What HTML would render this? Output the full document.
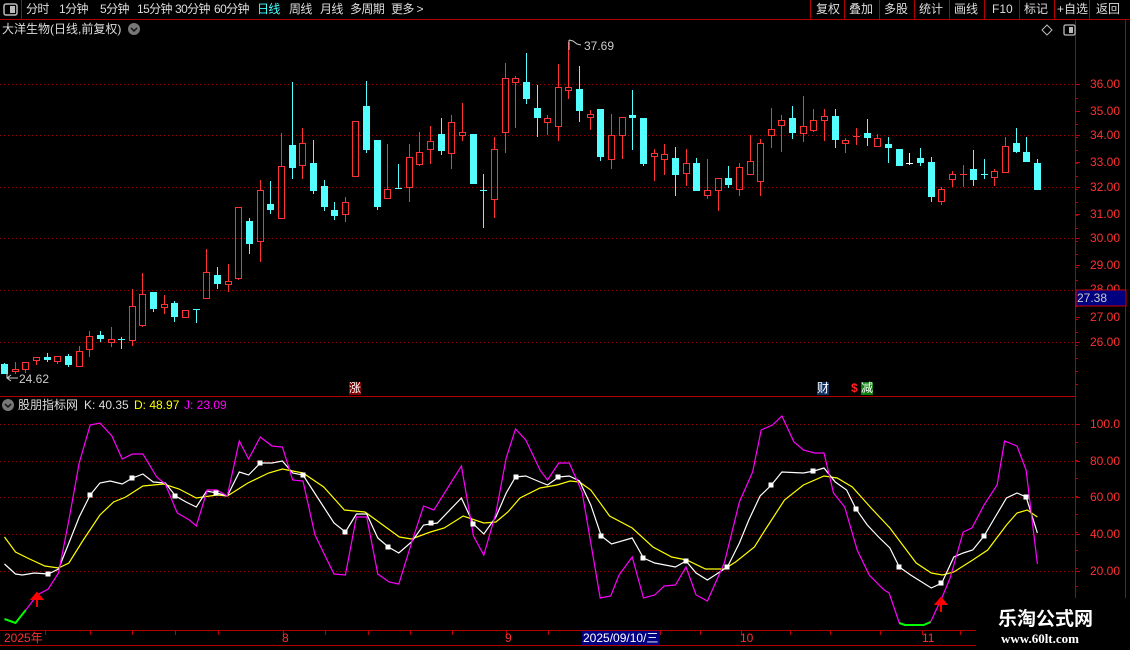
<!DOCTYPE html>
<html><head><meta charset="utf-8">
<style>
html,body{margin:0;padding:0;background:#000;width:1130px;height:650px;overflow:hidden}
body{position:relative;font-family:"Liberation Sans","Noto Sans CJK SC",sans-serif;font-size:12px;color:#ddd}
.t{position:absolute;white-space:nowrap;line-height:14px}
.m{letter-spacing:-0.6px}
svg{position:absolute;left:0;top:0}
</style></head><body>
<svg id="s" width="1130" height="650" xmlns="http://www.w3.org/2000/svg">
<g stroke="#b00000" stroke-width="1" shape-rendering="crispEdges">
<line x1="0" y1="19.5" x2="1130" y2="19.5"/>
<line x1="21.5" y1="0" x2="21.5" y2="19"/>
<line x1="810.5" y1="0" x2="810.5" y2="19"/><line x1="844.5" y1="0" x2="844.5" y2="19"/>
<line x1="879.5" y1="0" x2="879.5" y2="19"/><line x1="914.5" y1="0" x2="914.5" y2="19"/>
<line x1="949.5" y1="0" x2="949.5" y2="19"/><line x1="984.5" y1="0" x2="984.5" y2="19"/>
<line x1="1019.5" y1="0" x2="1019.5" y2="19"/><line x1="1054.5" y1="0" x2="1054.5" y2="19"/>
<line x1="1089.5" y1="0" x2="1089.5" y2="19"/>
<line x1="1075.5" y1="19" x2="1075.5" y2="630"/>
<line x1="1125.5" y1="19" x2="1125.5" y2="630"/>
<line x1="0" y1="396.5" x2="1075" y2="396.5"/>
<line x1="0" y1="630.5" x2="978" y2="630.5"/>
<line x1="0" y1="645.5" x2="978" y2="645.5"/>
</g>
<g stroke="#a00000" stroke-dasharray="1,3" stroke-width="1" shape-rendering="crispEdges">
<line x1="0" y1="84.5" x2="1075" y2="84.5"/><line x1="0" y1="135.5" x2="1075" y2="135.5"/>
<line x1="0" y1="187.5" x2="1075" y2="187.5"/><line x1="0" y1="238.5" x2="1075" y2="238.5"/>
<line x1="0" y1="290.5" x2="1075" y2="290.5"/><line x1="0" y1="342.5" x2="1075" y2="342.5"/>
<line x1="0" y1="424.5" x2="1075" y2="424.5"/><line x1="0" y1="461.5" x2="1075" y2="461.5"/>
<line x1="0" y1="497.5" x2="1075" y2="497.5"/><line x1="0" y1="534.5" x2="1075" y2="534.5"/>
<line x1="0" y1="571.5" x2="1075" y2="571.5"/>
</g>
<g id="ticks" stroke="#c00000" stroke-width="1" shape-rendering="crispEdges"></g>
<g id="candles" shape-rendering="crispEdges"></g>
<g fill="none" stroke-width="1.2">
<polyline id="D" stroke="#ffff00"/>
<polyline id="K" stroke="#ffffff"/>
<polyline id="J" stroke="#ff00ff"/>
<polyline id="JG1" stroke="#00ff00" stroke-width="2"/>
<polyline id="JG2" stroke="#00ff00" stroke-width="2"/>
</g>
<g id="sq" fill="#fff"></g>
<g stroke="#ff0000" stroke-width="2" fill="#ff0000">
<line x1="37" y1="598" x2="37" y2="607"/><polygon points="32,599 37,593 42,599"/>
<line x1="941" y1="603" x2="941" y2="612"/><polygon points="936,604 941,598 946,604"/>
</g>
<rect x="4" y="4" width="13" height="11" rx="2" fill="none" stroke="#bbb" stroke-width="1.5"/>
<rect x="10" y="6" width="5" height="7" fill="#bbb"/>
<rect x="1064" y="25" width="11" height="10" rx="1.5" fill="none" stroke="#bbb" stroke-width="1.3"/>
<rect x="1069" y="27" width="4" height="6" fill="#bbb"/>
<polygon points="1047,25 1052,30 1047,35 1042,30" fill="none" stroke="#bbb"/>
<circle cx="134" cy="29" r="6" fill="#777"/><polyline points="131,28 134,31 137,28" fill="none" stroke="#111" stroke-width="1.5"/>
<circle cx="8" cy="405" r="6" fill="#777"/><polyline points="5,404 8,407 11,404" fill="none" stroke="#111" stroke-width="1.5"/>
<polyline points="11,375 7,378 11,381" fill="none" stroke="#ccc"/><line x1="7" y1="378" x2="18" y2="378" stroke="#ccc"/><line x1="7" y1="370" x2="7" y2="378" stroke="#ccc"/>
<line x1="569" y1="40" x2="569" y2="50" stroke="#ccc"/><polyline points="569,40 573,41 577,44 581,45" fill="none" stroke="#ccc"/>
<rect x="1076" y="290" width="50" height="16" fill="#000080" stroke="#d00000"/>
<rect x="582" y="631" width="78" height="14" fill="#000080"/>
<rect x="976" y="598" width="154" height="52" fill="#000"/>
</svg>

<div class="t m" style="left:26px;top:2px;color:#ddd">分时</div>
<div class="t m" style="left:59px;top:2px">1分钟</div>
<div class="t m" style="left:100px;top:2px">5分钟</div>
<div class="t m" style="left:137px;top:2px">15分钟</div>
<div class="t m" style="left:175px;top:2px">30分钟</div>
<div class="t m" style="left:214px;top:2px">60分钟</div>
<div class="t m" style="left:257px;top:2px;color:#44ffff">日线</div>
<div class="t m" style="left:289px;top:2px">周线</div>
<div class="t m" style="left:320px;top:2px">月线</div>
<div class="t m" style="left:350px;top:2px">多周期</div>
<div class="t m" style="left:391px;top:2px">更多 &gt;</div>
<div class="t" style="left:816px;top:2px">复权</div>
<div class="t" style="left:849px;top:2px">叠加</div>
<div class="t" style="left:884px;top:2px">多股</div>
<div class="t" style="left:919px;top:2px">统计</div>
<div class="t" style="left:954px;top:2px">画线</div>
<div class="t" style="left:992px;top:2px">F10</div>
<div class="t" style="left:1024px;top:2px">标记</div>
<div class="t" style="left:1057px;top:2px">+自选</div>
<div class="t" style="left:1096px;top:2px">返回</div>
<div class="t" style="left:2px;top:22px;color:#ddd">大洋生物(日线,前复权)</div>

<div class="t" style="left:19px;top:372px;color:#ccc">24.62</div>
<div class="t" style="left:584px;top:39px;color:#ccc">37.69</div>

<div class="t" style="left:349px;top:382px;background:#800000;color:#fff;line-height:13px">涨</div>
<div class="t" style="left:817px;top:382px;background:#103060;color:#fff;line-height:13px">财</div>
<div class="t" style="left:851px;top:382px;color:#ff2020;font-weight:bold;line-height:13px">$</div>
<div class="t" style="left:861px;top:382px;background:#108010;color:#fff;line-height:13px">减</div>

<div class="t" style="left:18px;top:398px;color:#ddd">股朋指标网</div>
<div class="t" style="left:84px;top:398px;color:#ddd">K: 40.35</div>
<div class="t" style="left:134px;top:398px;color:#ffff00">D: 48.97</div>
<div class="t" style="left:184px;top:398px;color:#ff00ff">J: 23.09</div>

<div id="ax"></div>
<div class="t" style="left:1077px;top:291px;color:#ccc;font-size:12px">27.38</div>

<div class="t" style="left:4px;top:631px;color:#ff3030">2025年</div>
<div class="t" style="left:282px;top:631px;color:#ff3030">8</div>
<div class="t" style="left:505px;top:631px;color:#ff3030">9</div>
<div class="t" style="left:583px;top:631px;color:#fff">2025/09/10/三</div>
<div class="t" style="left:740px;top:631px;color:#ff3030">10</div>
<div class="t" style="left:922px;top:631px;color:#ff3030">11</div>

<div class="t" style="left:998px;top:607px;color:#fff;font-size:19px;font-weight:bold;line-height:22px;font-family:'Noto Sans CJK SC',sans-serif">乐淘公式网</div>
<div class="t" style="left:1001px;top:632px;color:#fff;font-size:13px;font-weight:bold;font-family:'Liberation Serif',serif">www.60lt.com</div>

<script>
var NS="http://www.w3.org/2000/svg";
var d=`c 364 373 363 373
r 369 371 362 373
r 362 369 362 372
r 357 360 357 364
c 357 359 353 361
r 356 361 356 363
c 356 364 354 366
r 351 366 346 366
r 336 349 331 356
c 335 338 331 341
r 339 342 327 346
c 339 340 337 348
r 306 340 289 345
r 294 325 273 326
c 292 308 292 311
r 304 307 295 313
c 303 316 301 321
r 310 317 310 317
c 309 310 309 322
r 272 298 249 298
c 275 283 267 288
r 281 284 264 291
r 207 278 207 279
c 221 243 218 253
r 190 241 180 261
c 204 209 181 213
r 166 218 133 218
c 145 167 82 178
r 143 165 128 178
c 163 190 140 193
c 186 206 180 210
c 210 215 202 219
r 202 214 197 221
r 121 176 121 176
c 106 149 81 152
c 140 206 140 209
r 189 198 144 198
c 188 189 164 188
r 157 187 144 201
r 152 164 132 165
r 141 149 126 163
c 134 150 118 154
r 122 153 115 168
r 132 135 103 140
c 134 183 134 183
c 190 191 174 227
r 149 199 137 217
r 78 132 63 152
r 78 82 76 127
c 82 98 53 103
c 108 117 85 136
r 118 122 115 134
r 87 126 64 140
r 87 90 42 98
c 89 110 66 121
r 114 117 110 129
c 109 156 109 160
r 135 159 114 168
r 117 135 117 158
c 115 117 90 149
c 118 163 118 165
r 153 156 149 180
r 154 159 144 174
c 158 174 147 195
r 163 173 149 185
c 163 190 158 190
r 190 195 159 198
r 178 190 178 210
c 178 184 166 187
r 167 189 163 195
r 161 174 135 174
r 143 181 139 195
r 129 135 108 147
r 120 125 115 151
c 118 132 106 138
r 126 133 96 141
r 120 130 109 131
r 116 120 109 140
c 116 139 109 147
r 140 143 138 152
r 136 137 128 144
c 133 137 119 145
r 138 146 134 146
c 144 147 137 162
c 149 165 149 165
w 163 164 153 164
c 158 162 148 165
c 162 196 157 201
r 189 201 187 204
r 174 179 171 186
r 174 175 165 186
c 169 179 150 185
c 174 175 159 178
r 171 177 169 185
r 146 172 137 172
c 143 151 128 152
c 152 161 137 161
c 163 189 159 189`.split("\n");
var g=document.getElementById("candles");
function el(n,a){var e=document.createElementNS(NS,n);for(var k in a)e.setAttribute(k,a[k]);return e;}
d.forEach(function(l,i){var p=l.trim().split(/\s+/);var c=p[0],bt=+p[1],bb=+p[2],wt=+p[3],wb=+p[4];
var x=Math.round(4+10.65*i);var col=c=="r"?"#ff3232":(c=="c"?"#54ffff":"#ffffff");
if(bb-bt<=1){g.appendChild(el("line",{x1:x+.5,y1:wt,x2:x+.5,y2:wb+1,stroke:col}));g.appendChild(el("line",{x1:x-3,y1:bt+.5,x2:x+4,y2:bt+.5,stroke:col}));return;}
if(wt<bt)g.appendChild(el("line",{x1:x+.5,y1:wt,x2:x+.5,y2:bt,stroke:col}));
if(wb>bb)g.appendChild(el("line",{x1:x+.5,y1:bb,x2:x+.5,y2:wb+1,stroke:col}));
if(c=="r")g.appendChild(el("rect",{x:x-2.5,y:bt+.5,width:6,height:bb-bt,fill:"none",stroke:col}));
else g.appendChild(el("rect",{x:x-3,y:bt,width:7,height:bb-bt+1,fill:col}));
});
var J="25.8,610 37.2,595 48.2,589 58.5,573 68.9,520 79.2,463 90.2,425 99.9,423 111.9,436 122.2,459 132.6,454 142.9,454 156.7,477 165.3,484 177.3,513 189.4,520 196.3,526 207.3,490 216.9,490 227.3,496 239.3,441 248.6,459 260.3,437 272,446 282.4,447 292.7,480 303,481 315,535 334,574 345.4,575 356.4,517 366.7,517 377.8,574 389.1,582 398.8,584 411.5,543 423.6,506 433.9,510 461.4,466 473.5,536 483.8,555 495.9,513 506.2,458 515.5,429 525.8,440 540,470 547.5,480 558.8,463 569.3,463 582.1,492 600.2,598 610.7,596 619,575 632.2,557 643.5,598 654.7,595 664.2,586 675.4,585 686,567 696.1,595 707.4,601 724.3,563 739.4,502 752.6,472 761.2,430 772.5,425 781.9,416 794,442 803.4,450 814.6,453 824,453 833.5,493 844.7,507 857.2,550 869.2,575 884.2,590 889.1,593 899.3,623 904.9,625 923.7,625 930.5,622 941.8,598 950.1,578 963.2,532 971.9,528 984,505 997.1,485 1004.6,441 1017,446 1026.1,470 1037.4,564";
var K="4.5,564 15.5,574 22.4,575 34.4,573 48.2,574 58.5,569 68.9,543 79.2,517 90.2,495 99.9,483 110.2,481 122.2,484 132.6,478 142.9,474 153.2,482 165.3,483 175.6,496 186,502 196.3,507 206.6,491 216.9,493 227.3,496 239.3,472 248.6,475 260.3,463 272,463 282.4,461 292.7,473 303,475 323.7,507 334,523 345.4,532 356.4,514 366.7,514 377.8,538 388.4,547 398.8,553 411.5,542 423.6,525 437.3,523 461.4,498 473.5,524 483.8,534 495.9,517 506.2,493 515.5,477 525.8,476 540,482 547.5,485 558.8,477 569.3,476 579.5,481 590.8,505 601.3,536 611.5,544 632.2,538 643.5,558 654.7,563 675.4,567 686,561 696.1,573 707.4,580 727.4,567 739.4,543 748.8,520 760.1,496 771.4,485 781.9,472 803.4,473 813.9,471 824,468 835.3,482 846.6,490 856,509 867.3,525 878.6,537 889.9,548 899.3,567 910.6,575 931.3,588 941.8,583 953.8,557 963.2,553 972.7,550 984,536 995.2,517 1006.5,498 1017,493 1026.1,497 1037.4,533";
var D="4.5,537 15.5,552 27.5,558 44.8,566 58.5,568 68.9,563 82.6,541 99.9,515 113.6,502 125.7,497 142.9,486 163.6,484 179.1,489 196.3,498 216.9,495 227.3,496 247.9,483 268.6,473 282.4,469 303,473 323.7,487 344.4,510 365,512 378.8,522 399.4,537 411.5,539 430.4,532 444.2,528 463.2,516 483.8,523 495.9,522 507.9,512 520,498 540,488 557,485 570.1,481 579.5,482 590.8,490 609.6,516 632.2,528 652.9,547 671.7,557 686.7,560 705.5,569 724.3,569 735.6,562 754.4,547 765.7,529 784.5,500 803.4,485 824,476 837.2,478 852.3,487 871.1,508 889.9,528 904.9,548 916.2,563 931.3,573 942.6,575 953.8,572 972.7,560 987.7,550 1006.5,525 1017,513 1027.2,510 1037.4,517";
document.getElementById("J").setAttribute("points",J);
document.getElementById("K").setAttribute("points",K);
document.getElementById("D").setAttribute("points",D);
document.getElementById("JG1").setAttribute("points","4.5,619 10,621 15.5,623 25.8,610");
document.getElementById("JG2").setAttribute("points","899.3,623 904.9,625 923.7,625 930.5,622");
var sq=document.getElementById("sq");
[[48,574],[90,495],[132,478],[175,496],[216,493],[260,463],[303,475],[345,532],[388,547],[431,523],[473,524],[516,477],[558,477],[601,536],[643,558],[686,561],[727,567],[771,485],[813,471],[856,509],[899,567],[941,583],[984,536],[1026,497]].forEach(function(p){sq.appendChild(el("rect",{x:p[0]-2.5,y:p[1]-2.5,width:5,height:5}));});
var tk=document.getElementById("ticks"),ax=document.getElementById("ax"),h="";
[[36,84],[35,111],[34,135],[33,162],[32,187],[31,214],[30,238],[29,265],[27,317],[26,342]].forEach(function(a){
 tk.appendChild(el("line",{x1:1075,y1:a[1]+.5,x2:1080,y2:a[1]+.5}));
 h+='<div class="t" style="left:1090px;top:'+(a[1]-7)+'px;color:#ff3030">'+a[0]+'.00</div>';});
h+='<div class="t" style="left:1090px;top:282px;color:#ff3030;height:8px;overflow:hidden">28.00</div>';
[["100.0",424],["80.00",461],["60.00",497],["40.00",534],["20.00",571]].forEach(function(a){
 tk.appendChild(el("line",{x1:1075,y1:a[1]+.5,x2:1080,y2:a[1]+.5}));
 h+='<div class="t" style="left:1090px;top:'+(a[1]-7)+'px;color:#ff3030">'+a[0]+'</div>';});
for(var y=98;y<390;y+=13){tk.appendChild(el("line",{x1:1075,y1:y+.5,x2:1078,y2:y+.5}));}
for(var y=442;y<625;y+=18){tk.appendChild(el("line",{x1:1075,y1:y+.5,x2:1078,y2:y+.5}));}
[45,90,132,175,218,283,325,368,410,452,506,548,582,660,700,741,790,830,880,922,960].forEach(function(x){tk.appendChild(el("line",{x1:x+.5,y1:631,x2:x+.5,y2:635}));});
ax.innerHTML=h;
</script>
</body></html>
